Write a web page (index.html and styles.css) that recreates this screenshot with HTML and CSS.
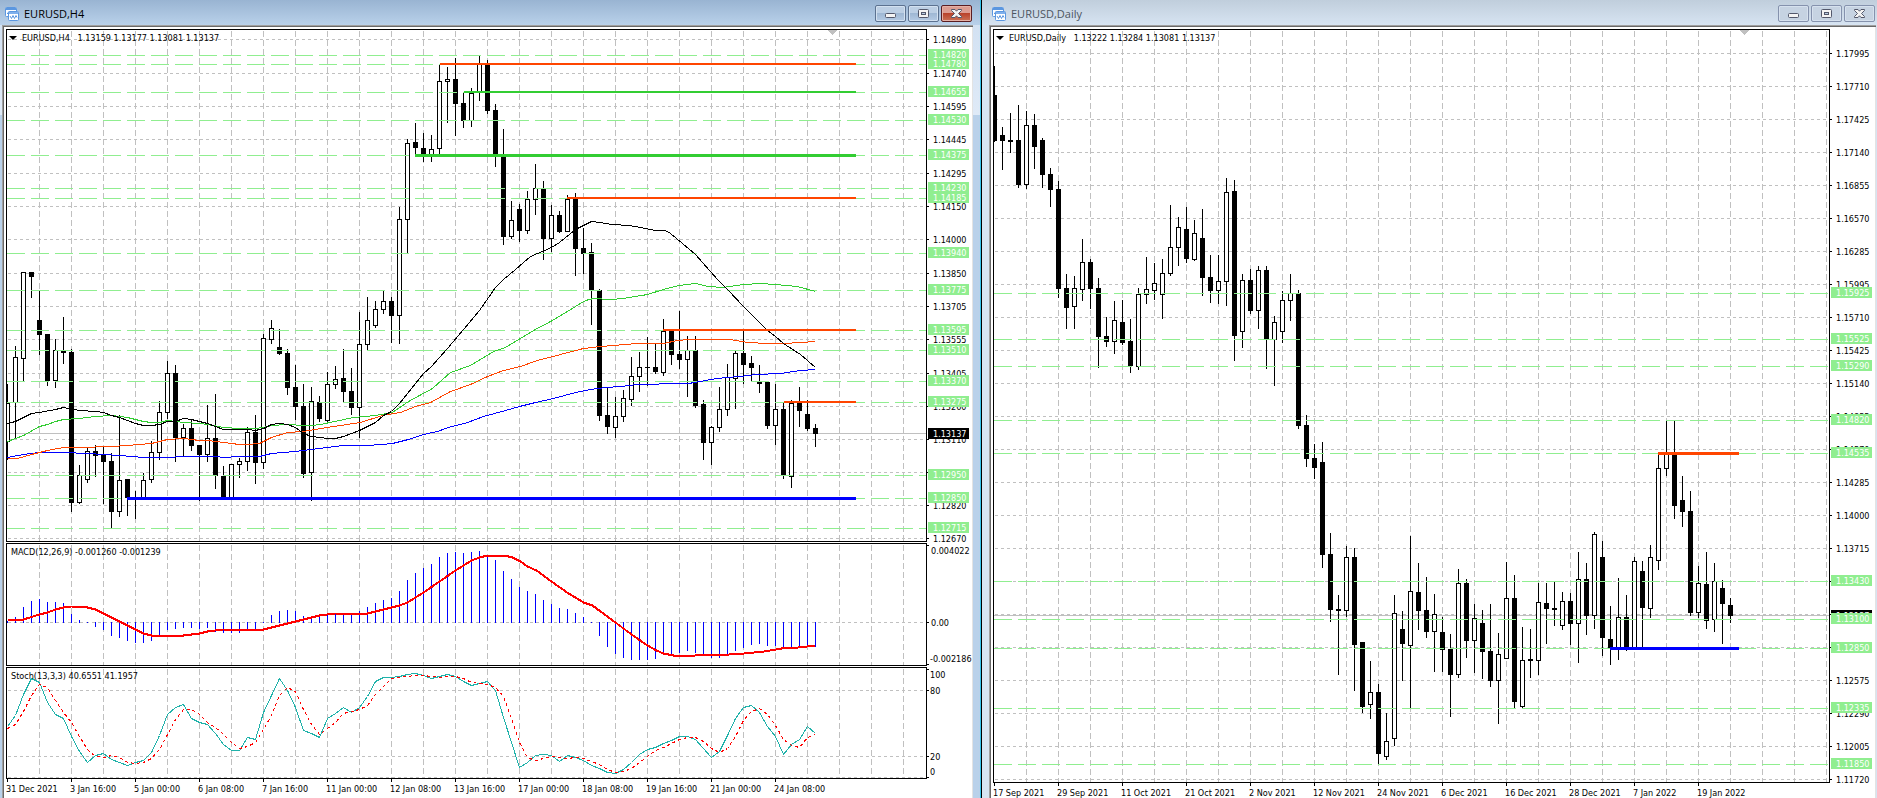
FILE: index.html
```html
<!DOCTYPE html>
<html lang="en">
<head>
<meta charset="utf-8">
<title>EURUSD charts</title>
<link rel="stylesheet" href="styles.css">
</head>
<body>
<svg class="sprites" aria-hidden="true">
  <symbol id="chart-icon" viewBox="0 0 14 14">
    <rect x="0.5" y="0.5" width="11" height="9" rx="1" fill="#fff" stroke="#5b97e0"/>
    <rect x="1" y="1" width="10" height="2" fill="#5b97e0"/>
    <path d="M2 6.500h1v-1h1v-1h1v2h1v-1h2v1h1" fill="none" stroke="#5b97e0"/>
    <rect x="3.500" y="4.500" width="10" height="9" rx="1" fill="#fff" stroke="#5b97e0"/>
    <rect x="4" y="5" width="9" height="2" fill="#7fb0ec"/>
    <path d="M5 9l1.500 2.500L8 8.500l1.500 3L11 8.500l1 2" fill="none" stroke="#5b97e0"/>
  </symbol>
  <symbol id="min-icon" viewBox="0 0 31 17">
    <rect x="10.500" y="8.500" width="10" height="4" rx="1" fill="#f4f4f4" stroke="#53586b"/>
  </symbol>
  <symbol id="max-icon" viewBox="0 0 31 17">
    <rect x="10.500" y="4.500" width="10" height="8" rx="1" fill="#f4f4f4" stroke="#53586b"/>
    <rect x="13.500" y="7.500" width="4" height="2" fill="#b8cce2" stroke="#53586b"/>
  </symbol>
  <symbol id="close-icon" viewBox="0 0 31 17">
    <path d="M10.500 4.500h3.500l1.500 1.700 1.500-1.700h3.500v1l-3 3 3 3v1h-3.500l-1.500-1.700-1.500 1.700h-3.500v-1l3-3-3-3z" fill="#f4f4f4" stroke="#53586b"/>
  </symbol>
</svg>
<main class="desk">
  <section class="win win-active" aria-label="EURUSD,H4">
    <header class="titlebar">
      <svg class="app-icon" aria-hidden="true"><use href="#chart-icon"/></svg>
      <h2 class="title">EURUSD,H4</h2>
      <button class="ctl" type="button" aria-label="Minimize"><svg class="ctl-icon"><use href="#min-icon"/></svg></button>
      <button class="ctl" type="button" aria-label="Maximize"><svg class="ctl-icon"><use href="#max-icon"/></svg></button>
      <button class="ctl ctl-close" type="button" aria-label="Close"><svg class="ctl-icon"><use href="#close-icon"/></svg></button>
    </header>
    <div class="client">
      <div class="pane pane-main">
        <div class="plot"><svg id="h4-price"></svg><p class="legend"><span class="arrow"></span>EURUSD,H4&nbsp;&nbsp; 1.13159 1.13177 1.13081 1.13137</p></div>
        <svg class="scale" id="h4-scale"></svg>
      </div>
      <div class="pane pane-macd">
        <div class="plot"><svg id="h4-macd"></svg><p class="legend legend-sub">MACD(12,26,9) -0.001260 -0.001239</p></div>
        <svg class="scale" id="macd-scale"></svg>
      </div>
      <div class="pane pane-stoch">
        <div class="plot"><svg id="h4-stoch"></svg><p class="legend legend-sub">Stoch(13,3,3) 40.6551 41.1957</p></div>
        <svg class="scale" id="stoch-scale"></svg>
      </div>
      <svg class="dates" id="h4-dates"></svg>
    </div>
  </section>
  <section class="win win-idle" aria-label="EURUSD,Daily">
    <header class="titlebar">
      <svg class="app-icon" aria-hidden="true"><use href="#chart-icon"/></svg>
      <h2 class="title">EURUSD,Daily</h2>
      <button class="ctl" type="button" aria-label="Minimize"><svg class="ctl-icon"><use href="#min-icon"/></svg></button>
      <button class="ctl" type="button" aria-label="Maximize"><svg class="ctl-icon"><use href="#max-icon"/></svg></button>
      <button class="ctl" type="button" aria-label="Close"><svg class="ctl-icon"><use href="#close-icon"/></svg></button>
    </header>
    <div class="client">
      <div class="pane pane-main">
        <div class="plot"><svg id="d1-price"></svg><p class="legend"><span class="arrow"></span>EURUSD,Daily&nbsp;&nbsp; 1.13222 1.13284 1.13081 1.13137</p></div>
        <svg class="scale" id="d1-scale"></svg>
      </div>
      <svg class="dates" id="d1-dates"></svg>
    </div>
  </section>
</main>
<script src="charts.js"></script>
</body>
</html>
```
FILE: styles.css
```css
* { box-sizing: border-box; }
body { margin: 0; background: #b9d1ea; font-family: "DejaVu Sans Condensed", "DejaVu Sans", sans-serif; font-size: 9px; color: #000; }
.sprites { display: none; }
.desk { display: grid; grid-template-columns: 982fr 895fr; height: 100vh; min-height: 640px; overflow: hidden; }
.win { display: flex; flex-direction: column; min-width: 0; }
.win-active { background: linear-gradient(#cfdff1, #dfeaf7) no-repeat 0 0 / 100% 115px #b9d1ea; border-right: 1px solid #000; padding: 0 8px 0 2px; box-shadow: inset -1px 0 #35c3ea; }
.win-idle { background: #d7e4f2; padding: 0 1px 0 7px; }
.titlebar { display: flex; align-items: center; gap: 2px; height: 25px; flex: none; }
.win-active .titlebar { background: linear-gradient(#99b4d2, #b9d1ea); margin: 0 -7px 0 -2px; padding: 2px 8px 0 5px; }
.win-idle .titlebar { background: linear-gradient(#c0cedc, #d7e4f2); margin: 0 -1px 0 -7px; padding: 2px 2px 0 10px; }
.app-icon { width: 14px; height: 14px; }
.title { flex: 1; margin: 0; padding: 0 0 0 3px; font: 11px/20px "Open Sans", "Noto Sans", sans-serif; color: #000; }
.win-idle .title { color: #4c5560; }
.ctl { width: 31px; height: 17px; padding: 0; border: 1px solid #5c7290; border-radius: 2px; background: linear-gradient(#bccfe4 45%, #9fb8d4 50%, #b5cbe4); box-shadow: inset 0 0 0 1px #d3e1f0; }
.win-idle .ctl { border-color: #8592ad; background: #c6d3e2; box-shadow: inset 0 0 0 1px #d6e1ee; }
.win-active .ctl-close { border-color: #5a1d22; background: linear-gradient(#dc9d92 45%, #b9432c 50%, #cb7257); box-shadow: inset 0 0 0 1px #e5b1a6; }
.ctl-icon { display: block; width: 31px; height: 17px; margin: -1px; }
.client { flex: 1; min-height: 0; display: flex; flex-direction: column; gap: 1px; background: #fff; border: 1px solid #a0a0a0; border-width: 1px 0 0 1px; box-shadow: inset 1px 1px #696969, inset -1px 0 #e3e3e3; padding: 3px 0 0 3px; }
.pane { display: flex; flex: none; }
.pane-main { flex: 1; min-height: 0; }
.pane-macd { height: 123px; }
.pane-stoch { height: 112px; }
.plot { position: relative; flex: 1; min-width: 0; border: 1px solid #000; overflow: hidden; }
.plot svg { display: block; width: 100%; height: 100%; shape-rendering: crispEdges; }
.legend { position: absolute; left: 2px; top: 2px; margin: 0; line-height: 12px; white-space: nowrap; display: flex; align-items: center; }
.legend-sub { left: 4px; }
.arrow { width: 0; height: 0; margin: 0 5px 0 0; border: 4px solid transparent; border-top-color: #000; border-bottom: 0; }
.scale { width: 46px; height: 100%; overflow: visible; shape-rendering: crispEdges; }
.dates { width: 100%; height: 19px; flex: none; margin-top: -1px; shape-rendering: crispEdges; }
.win-idle .dates { height: 15px; }
text { font: 9px "DejaVu Sans Condensed", "DejaVu Sans", sans-serif; }
.grid { fill: none; stroke: #c0c0c0; stroke-dasharray: 3 3; }
.grid-column { stroke-dasharray: 6 3; }
.level { stroke: #90ee90; stroke-dasharray: 18 6; }
.price-line { stroke: #c0c0c0; }
.marker { fill: #c0c0c0; }
.up { fill: #fff; stroke: #000; }
.down, .wick, .tick, .price-box { fill: #000; }
.level-box { fill: #90ee90; }
.box-text { fill: #fff; }
.line { fill: none; }
.black { stroke: #000; }
.green { stroke: #32cd32; }
.orange { stroke: #ff4500; }
.blue { stroke: #00f; }
.teal { stroke: #20b2aa; }
.signal { stroke: #f00; stroke-width: 2; }
.dashed { stroke: #f00; stroke-dasharray: 3 3; }
.bar, .fill-blue { fill: #00f; }
.fill-orange { fill: #ff4500; }
.fill-green { fill: #32cd32; }
```
FILE: charts.js
```js
const NS = 'http://www.w3.org/2000/svg';
const FAR = 4000;
const STEP = 8;

function el(parent, name, attrs, text) {
  const node = document.createElementNS(NS, name);
  for (const key in attrs) node.setAttribute(key, attrs[key]);
  if (text !== undefined) node.textContent = text;
  parent.appendChild(node);
  return node;
}
function layer(id, x, y) {
  return el(document.getElementById(id), 'g', { transform: `translate(${-x},${-y})` });
}
function rect(g, cls, x, y, width, height) {
  el(g, 'rect', { class: cls, x, y, width, height });
}
function hline(g, cls, x, y) {
  el(g, 'path', { class: cls, d: `M${x} ${y + 0.5}H${FAR}` });
}
function columns(g, x, top, bottom) {
  for (let cx = x; cx < FAR; cx += 32) el(g, 'path', { class: 'grid grid-column', d: `M${cx + 0.5} ${top}V${bottom}` });
}
// Rows of "high top bottom low kind", kind being u (rising) or d (falling).
function candles(g, x0, rows) {
  rows.trim().split(/\s*,\s*/).forEach((row, i) => {
    const [hi, top, bot, lo, kind] = row.split(' ');
    const x = x0 + i * STEP;
    rect(g, 'wick', x, +hi, 1, lo - hi);
    if (kind === 'u') rect(g, 'up', x - 1.5, +top + 0.5, 4, bot - top - 1);
    else rect(g, 'down', x - 2, +top, 5, bot - top);
  });
}
function curve(g, cls, points) {
  const d = points.trim().split(/\s+/).map((p) => p.split(',').map((v) => Math.round(+v) + 0.5).join(' '));
  el(g, 'path', { class: 'line ' + cls, d: 'M' + d.join('L') });
}
function series(g, cls, x0, values) {
  curve(g, cls, values.trim().split(/\s+/).map((v, i) => `${x0 + i * STEP},${v}`).join(' '));
}
function scale(id, x, y, grid, levels, price) {
  const g = layer(id, x, y);
  grid.forEach(([ly, label]) => {
    rect(g, 'tick', x, ly, 2, 1);
    if (label) el(g, 'text', { x: x + 6, y: ly + 4 }, label);
  });
  rect(g, 'price-box', x + 1, price - 5, 41, 11);
  el(g, 'text', { class: 'box-text', x: x + 6, y: price + 4 }, '1.13137');
  levels.forEach(([ly, label]) => {
    rect(g, 'level-box', x + 1, ly - 6, 41, 11);
    el(g, 'text', { class: 'box-text', x: x + 6, y: ly + 3 }, label);
  });
}
function dates(id, x, labels) {
  const g = layer(id, x, 0);
  labels.forEach((label, i) => {
    const tx = x + 1 + i * 64;
    rect(g, 'tick', tx, 0, 1, 3);
    el(g, 'text', { x: tx - 1, y: 13 }, label);
  });
}
function marker(g, x, y) {
  el(g, 'path', { class: 'marker', d: `M${x - 5} ${y}h10l-5 5z` });
}

const h4Grid = [[39, '1.14890'], [73, '1.14740'], [106, '1.14595'], [139, '1.14445'], [173, '1.14295'], [206, '1.14150'], [239, '1.14000'], [273, '1.13850'], [306, '1.13705'], [339, '1.13555'], [373, '1.13405'], [406, '1.13260'], [439, '1.13110'], [472, ''], [505, '1.12820'], [538, '1.12670']];
const h4Levels = [[55, '1.14820'], [64, '1.14780'], [92, '1.14655'], [120, '1.14530'], [155, '1.14375'], [188, '1.14230'], [198, '1.14185'], [253, '1.13940'], [290, '1.13775'], [330, '1.13595'], [350, '1.13510'], [381, '1.13370'], [402, '1.13275'], [475, '1.12950'], [498, '1.12850'], [528, '1.12715']];
const h4Candles = `384 403 442 460 u,346 357 403 438 u,272 272 359 381 u,272 272 277 298 d,291 320 335 355 d,334 334 381 386 d,339 350 381 388 u,317 351 353 364 d,349 352 503 512 d,465 475 503 504 u,
447 451 480 483 u,445 451 456 477 d,447 454 462 504 d,453 461 512 528 d,415 480 512 517 u,479 479 498 516 d,491 497 498 519 d,473 480 498 498 u,441 452 480 483 u,401 412 453 460 u,
361 373 413 419 u,365 373 438 462 d,424 428 438 456 u,420 428 446 451 d,445 445 455 501 d,405 438 455 462 u,394 438 476 489 d,466 476 498 498 d,464 464 498 498 u,458 461 465 478 u,
427 432 462 471 u,415 432 463 484 d,334 338 463 469 u,320 328 340 344 u,329 347 354 355 d,349 353 388 395 d,365 387 407 420 d,384 406 474 478 d,387 401 473 501 u,396 402 419 422 d,
372 384 421 422 u,366 379 385 389 u,349 378 392 402 d,368 391 408 415 d,312 344 408 438 u,297 320 345 350 u,301 309 326 328 u,291 301 310 314 u,297 301 316 343 d,207 219 316 344 u,
139 143 220 253 u,123 142 148 154 d,133 148 155 162 d,135 149 155 162 u,64 81 149 154 u,67 79 82 123 u,58 79 104 136 d,92 103 121 128 d,88 93 121 127 u,56 64 92 101 u,
60 65 111 114 d,104 110 155 167 d,129 155 237 245 d,201 220 237 239 u,204 209 231 242 d,191 199 231 234 u,164 188 200 215 u,181 189 239 260 d,205 215 239 252 u,211 215 232 233 d,
195 199 232 232 u,193 199 249 276 d,228 248 254 274 d,243 252 290 325 d,289 290 416 421 d,388 415 427 434 d,397 416 428 438 u,390 398 417 422 u,357 376 400 406 u,352 367 377 392 u,
337 367 368 386 d,344 367 372 374 d,319 331 373 376 u,330 330 355 365 d,311 354 360 369 d,336 350 360 397 u,336 350 406 408 d,400 404 443 460 d,426 427 443 465 u,387 409 428 432 u,
364 377 410 416 u,351 353 379 409 u,331 353 365 384 d,356 363 368 381 d,365 382 384 393 d,382 382 426 429 d,384 409 426 445 u,402 409 475 479 d,400 403 477 488 u,387 403 411 427 d,
400 414 429 431 d,424 428 434 447 d`;

const p = layer('h4-price', 7, 30);
columns(p, 39, 31, 541);
h4Grid.forEach(([y]) => hline(p, 'grid', 8, y));
hline(p, 'price-line', 7, 433);
candles(p, 7, h4Candles);
h4Levels.forEach(([y]) => hline(p, 'level', 7, y));
curve(p, 'blue', '7,457 23,454 39,452 63,452 87,453 103,454 119,455 143,457 167,457 183,456 215,456 223,457 239,456 259,456 271,453 295,451 319,448 335,446 343,445 367,445 381,444 392,443 408,439 423,434 437,431 448,427 467,422 483,416 505,410 519,406 535,402 553,398 575,392 590,389 605,387 620,386 637,384 655,384 663,383 688,383 700,381 710,379 725,377 740,376 755,374 780,373 800,370 815,369');
curve(p, 'orange', '7,458 17,458 31,454 47,450 63,447 79,447 111,446 127,445 151,443 167,439 183,438 199,440 207,440 223,442 239,444 247,444 259,443 271,437 287,432 303,431 320,428 360,422 382,415 400,412 415,406 430,402 450,391 470,384 487,376 503,370 520,366 537,360 560,354 583,348 600,346 637,343 663,343 677,340 688,339 730,339 747,342 767,343 783,343 800,342 815,341');
curve(p, 'green', '7,441 23,435 39,426 47,424 55,421 63,419 79,418 95,416 111,415 127,417 135,419 143,421 151,422 159,422 167,420 175,421 183,422 199,423 207,424 223,427 239,428 255,428 263,427 271,425 287,424 303,425 311,425 320,424 353,417 375,415 392,412 408,401 432,388 450,372 470,365 493,351 505,347 533,330 552,320 575,306 585,300 593,298 610,299 623,298 647,294 663,289 678,285 695,283 708,286 722,287 743,284 760,283 775,284 797,286 815,291');
curve(p, 'black', '7,423 15,421 31,413 39,412 55,409 63,407 79,410 95,411 103,412 111,415 119,417 127,420 135,423 143,425 151,425 159,424 167,421 175,421 183,418 191,419 199,421 207,423 215,426 223,429 247,429 255,430 263,428 271,424 279,423 287,424 295,427 303,433 311,436 319,437 327,438 335,438 343,436 351,433 359,430 367,426 375,422 383,415 391,411 399,403 415,383 423,373 431,366 447,348 463,329 479,310 495,287 503,279 515,269 530,256 551,247 559,242 575,229 583,225 591,221 599,222 612,224 628,225 640,227 655,230 665,230 670,233 682,243 695,254 717,279 727,289 743,306 767,330 775,336 783,343 800,354 815,367');
rect(p, 'fill-orange', 440, 63, 416, 2);
rect(p, 'fill-green', 464, 91, 392, 2);
rect(p, 'fill-green', 415, 154, 441, 3);
rect(p, 'fill-orange', 567, 197, 289, 2);
rect(p, 'fill-orange', 663, 329, 193, 2);
rect(p, 'fill-orange', 784, 401, 72, 2);
rect(p, 'fill-blue', 127, 497, 729, 3);
marker(p, 832.5, 30);
scale('h4-scale', 927, 29, h4Grid, h4Levels, 433);

const m = layer('h4-macd', 7, 544);
columns(m, 39, 545, 665);
hline(m, 'grid', 8, 622);
`621 617 607 601 599 602 602 603 614 620 622 626 629 635 637 640 642 642 640 636 629 628 627 627 628 627 631 632 632 632 630 629 622 615 611 610 611 616 617 616 614 613 613 613 611 607 603 600 598 591 580 573 568 564 557 553 552 553 552 551 555 560 571 579 587 591 594 600 604 608 609 613 617 622 635 646 653 657 659 659 659 658 654 653 652 650 652 655 657 657 654 650 647 644 643 645 645 648 648 646 646 646`
  .split(' ').forEach((v, i) => rect(m, 'bar', 7 + i * STEP, Math.min(v, 622), 1, Math.abs(v - 622) + 1));
curve(m, 'signal', '7,619 23,619 39,614 47,612 55,609 63,607 71,606 79,606 87,607 95,609 103,613 119,621 135,629 143,633 151,635 183,635 199,633 207,631 223,629 231,629 263,629 279,625 295,621 311,617 319,615 335,613 367,613 383,609 399,605 407,602 423,592 439,581 455,570 471,560 479,557 487,555 495,555 504,555 512,557 520,561 527,566 536,570 551,581 568,593 575,597 583,602 592,605 600,611 615,622 631,634 647,645 656,650 663,653 673,655 695,655 729,654 744,653 764,651 781,648 798,647 815,645');
const ms = layer('macd-scale', 927, 543);
[545, 622, 664].forEach((y) => rect(ms, 'tick', 927, y, 2, 1));
el(ms, 'text', { x: 931, y: 554 }, '0.004022');
el(ms, 'text', { x: 931, y: 626 }, '0.00');
el(ms, 'text', { x: 930, y: 662 }, '-0.002186');

const s = layer('h4-stoch', 7, 668);
columns(s, 39, 669, 778);
[690, 756, 777].forEach((y) => hline(s, 'grid', 8, y));
series(s, 'teal', 7, '726 715 694 678 682 702 714 718 736 751 762 755 753 759 762 765 762 760 752 735 714 707 704 718 722 724 733 744 750 750 737 739 712 695 678 690 707 730 733 737 718 713 707 712 707 696 681 677 677 676 674 673 675 678 676 674 676 681 685 683 681 690 717 742 767 762 755 754 755 761 755 757 760 765 768 772 773 769 762 754 749 747 743 740 736 736 739 748 757 751 735 718 707 705 712 726 736 754 744 739 726 733');
series(s, 'dashed', 7, '728 724 711 695 684 687 700 712 722 736 749 756 757 755 757 762 763 762 758 749 734 719 709 709 714 722 727 734 742 748 746 742 729 715 695 687 691 709 724 734 728 722 713 711 709 705 694 686 678 677 676 675 675 676 677 676 676 678 682 683 684 687 696 718 742 757 760 758 756 757 758 757 758 761 764 769 772 771 768 762 756 750 747 743 739 737 737 741 748 752 748 736 720 711 708 714 725 739 745 747 737 734');
const ss = layer('stoch-scale', 927, 667);
[669, 690, 756, 777].forEach((y) => rect(ss, 'tick', 927, y, 2, 1));
[[678, '100'], [694, '80'], [760, '20'], [775, '0']].forEach(([y, t]) => el(ss, 'text', { x: 930, y }, t));
dates('h4-dates', 6, ['31 Dec 2021', '3 Jan 16:00', '5 Jan 00:00', '6 Jan 08:00', '7 Jan 16:00', '11 Jan 00:00', '12 Jan 08:00', '13 Jan 16:00', '17 Jan 00:00', '18 Jan 08:00', '19 Jan 16:00', '21 Jan 00:00', '24 Jan 08:00']);

const d1Grid = ['1.17995', '1.17710', '1.17425', '1.17140', '1.16855', '1.16570', '1.16285', '1.15995', '1.15710', '1.15425', '1.15140', '1.14855', '1.14570', '1.14285', '1.14000', '1.13715', '', '', '', '1.12575', '1.12290', '1.12005', '1.11720'].map((t, i) => [53 + i * 33, t]);
const d1Levels = [[293, '1.15925'], [339, '1.15525'], [366, '1.15290'], [420, '1.14820'], [453, '1.14535'], [581, '1.13430'], [619, '1.13100'], [648, '1.12850'], [708, '1.12335'], [764, '1.11850']];
const d1Candles = `66 95 141 142 d,127 135 141 170 d,113 140 142 153 d,105 140 185 188 d,111 125 185 189 u,114 125 147 169 d,138 140 175 188 d,168 174 190 207 d,181 189 289 298 d,274 288 308 329 d,
276 288 307 329 u,239 262 290 301 u,259 262 289 309 d,278 288 337 368 d,317 336 342 347 d,301 320 342 354 u,300 322 343 345 d,319 341 366 373 d,288 294 367 370 u,257 289 295 304 u,
263 283 291 300 u,259 273 295 319 u,205 247 274 276 u,217 227 248 266 u,207 229 259 263 d,220 233 260 261 u,209 238 278 296 d,255 277 291 303 d,255 281 291 304 u,178 192 282 306 u,
180 191 336 361 d,274 280 332 348 u,269 280 311 314 d,266 270 311 329 u,266 270 340 369 d,316 322 340 386 u,291 300 332 343 u,274 293 301 321 u,290 293 426 429 d,415 425 459 467 d,
444 458 468 479 d,442 462 555 568 d,533 554 610 622 d,595 609 611 675 d,546 557 611 617 u,548 557 645 691 d,642 642 707 713 d,661 692 705 719 u,684 692 754 764 d,713 741 757 760 u,
595 613 739 746 u,611 629 644 681 d,536 591 646 708 u,563 592 611 630 d,577 610 632 638 d,594 614 632 672 u,617 632 650 672 d,634 649 675 717 d,569 583 675 678 u,579 583 641 658 d,
604 618 641 673 u,610 623 652 679 d,604 651 681 687 d,633 654 681 724 u,562 598 659 659 u,575 598 702 708 d,627 660 707 708 u,629 659 661 678 d,583 602 661 675 u,583 603 609 644 d,
582 608 610 626 d,592 601 626 630 u,593 601 624 645 d,552 579 624 663 u,563 579 616 635 d,532 534 616 629 u,541 557 638 656 d,606 639 648 665 d,578 617 648 660 u,595 617 650 651 d,
557 561 648 648 u,561 571 608 648 d,545 557 609 618 u,454 468 561 570 u,421 453 469 476 u,421 453 506 519 d,476 500 512 527 d,491 511 613 616 d,566 583 613 618 u,552 584 621 629 d,
563 581 620 632 u,580 588 604 644 d,598 605 616 623 d`;

const d = layer('d1-price', 994, 30);
columns(d, 1026, 31, 782);
d1Grid.forEach(([y]) => hline(d, 'grid', 995, y));
hline(d, 'price-line', 994, 615);
candles(d, 994, d1Candles);
d1Levels.forEach(([y]) => hline(d, 'level', 994, y));
rect(d, 'fill-orange', 1658, 452, 81, 3);
rect(d, 'fill-blue', 1610, 647, 129, 3);
marker(d, 1744.5, 30);
scale('d1-scale', 1830, 29, d1Grid, d1Levels, 615);
dates('d1-dates', 993, ['17 Sep 2021', '29 Sep 2021', '11 Oct 2021', '21 Oct 2021', '2 Nov 2021', '12 Nov 2021', '24 Nov 2021', '6 Dec 2021', '16 Dec 2021', '28 Dec 2021', '7 Jan 2022', '19 Jan 2022']);
```
